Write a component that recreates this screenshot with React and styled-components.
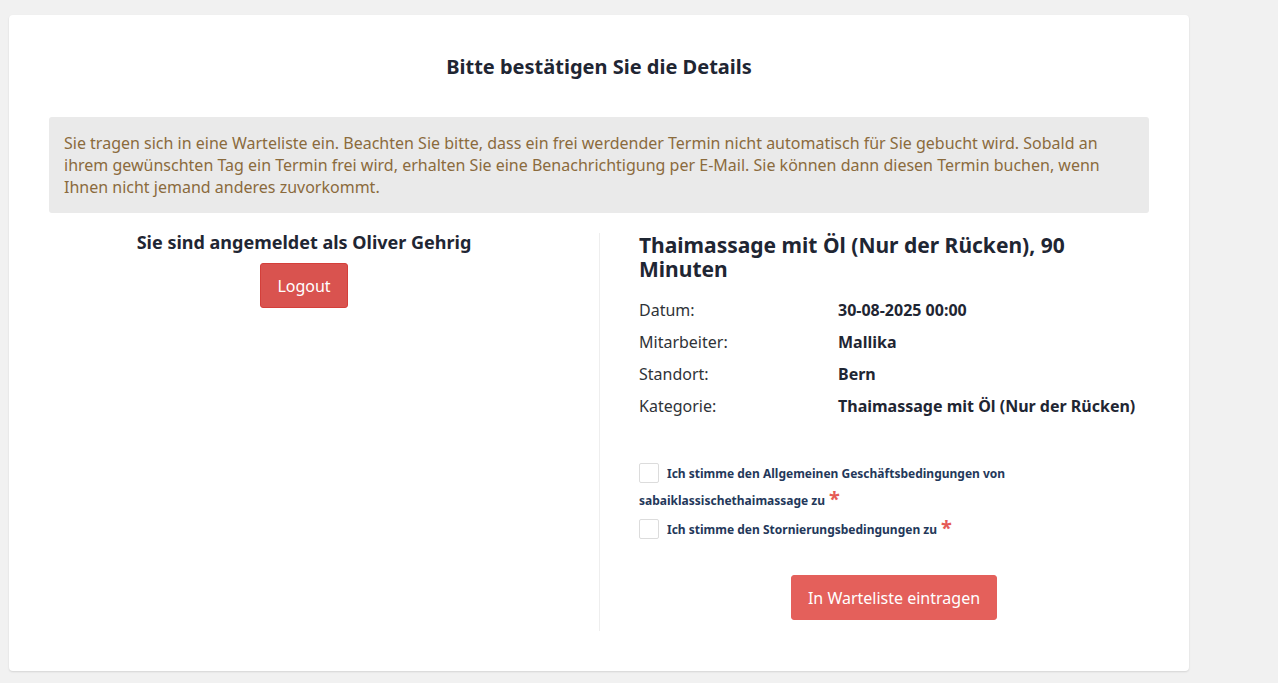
import styled, { createGlobalStyle } from 'styled-components';

const GlobalStyle = createGlobalStyle`
  body {
    margin: 0;
    background: #f1f1f1;
    font-family: "Noto Sans", "Open Sans", sans-serif;
    color: #1f2633;
  }
`;

const Page = styled.div`
  padding: 15px 0 13px 9px;
`;

const Card = styled.div`
  width: 1180px;
  box-sizing: border-box;
  background: #fff;
  border-radius: 4px;
  box-shadow: 0 1px 2px rgba(0, 0, 0, 0.12);
  padding: 40px 40px 40px;
`;

const Title = styled.h2`
  margin: 0 0 38px;
  text-align: center;
  font-size: 20px;
  line-height: 24px;
  font-weight: 700;
  color: #1f2633;
`;

const Notice = styled.div`
  background: #eaeaea;
  border-radius: 3px;
  padding: 15px 15px;
  color: #8b6b3d;
  font-size: 16px;
  line-height: 22px;
`;

const Columns = styled.div`
  display: grid;
  grid-template-columns: 550px 550px;
  margin-top: 20px;
`;

const LeftCol = styled.div`
  padding-right: 40px;
  display: flex;
  flex-direction: column;
  align-items: center;
`;

const RightCol = styled.div`
  border-left: 1px solid #eeeeee;
  padding: 0 0 11px 39px;
`;

const UserText = styled.div`
  font-size: 18px;
  font-weight: 700;
  line-height: 22px;
  margin-top: -2px;
`;

const Button = styled.button`
  font-family: inherit;
  font-size: 16px;
  color: #fff;
  background: ${(p) => p.$bg};
  border: 1px solid ${(p) => p.$border};
  border-radius: 3px;
  height: ${(p) => p.$h}px;
  padding: 0 ${(p) => p.$px}px;
  cursor: pointer;
`;

const LogoutWrap = styled.div`
  margin-top: 10px;
`;

const ServiceTitle = styled.h3`
  margin: 0 0 13px;
  font-size: 21px;
  line-height: 24px;
  font-weight: 700;
  color: #1f2633;
`;

const Details = styled.div`
  display: grid;
  grid-template-columns: 199px 1fr;
  grid-auto-rows: 32px;
  align-items: center;
  font-size: 16px;
`;

const Label = styled.div`
  color: #2f3338;
`;

const Value = styled.div`
  font-weight: 700;
  color: #1f2633;
`;

const Terms = styled.div`
  margin-top: 38px;
`;

const TermLine = styled.label`
  display: block;
  font-size: 12px;
  font-weight: 700;
  line-height: 27px;
  color: #24385a;
  margin-bottom: 2px;
`;

const Box = styled.span`
  display: inline-block;
  width: 18px;
  height: 18px;
  border: 1px solid #dcdcdc;
  border-radius: 2px;
  vertical-align: -5px;
  margin-right: 8px;
`;

const Star = styled.span`
  color: #e55a56;
  font-size: 20px;
  line-height: 0;
  margin-left: 4px;
  vertical-align: -1px;
`;

const Submit = styled.div`
  display: flex;
  justify-content: center;
  margin-top: 32px;
`;

const details = [
  ['Datum:', '30-08-2025 00:00'],
  ['Mitarbeiter:', 'Mallika'],
  ['Standort:', 'Bern'],
  ['Kategorie:', 'Thaimassage mit Öl (Nur der Rücken)'],
];

export default function App() {
  return (
    <>
      <GlobalStyle />
      <Page>
        <Card>
          <Title>Bitte bestätigen Sie die Details</Title>
          <Notice>
            Sie tragen sich in eine Warteliste ein. Beachten Sie bitte, dass ein frei werdender Termin nicht
            automatisch für Sie gebucht wird. Sobald an ihrem gewünschten Tag ein Termin frei wird, erhalten Sie
            eine Benachrichtigung per E-Mail. Sie können dann diesen Termin buchen, wenn Ihnen nicht jemand
            anderes zuvorkommt.
          </Notice>
          <Columns>
            <LeftCol>
              <UserText>Sie sind angemeldet als Oliver Gehrig</UserText>
              <LogoutWrap>
                <Button $bg="#d9534f" $border="#d43f3a" $h={45} $px={16}>Logout</Button>
              </LogoutWrap>
            </LeftCol>
            <RightCol>
              <ServiceTitle>Thaimassage mit Öl (Nur der Rücken), 90 Minuten</ServiceTitle>
              <Details>
                {details.map(([k, v]) => [
                  <Label key={k}>{k}</Label>,
                  <Value key={k + 'v'}>{v}</Value>,
                ])}
              </Details>
              <Terms>
                <TermLine>
                  <Box />
                  Ich stimme den Allgemeinen Geschäftsbedingungen von sabaiklassischethaimassage zu
                  <Star>*</Star>
                </TermLine>
                <TermLine>
                  <Box />
                  Ich stimme den Stornierungsbedingungen zu
                  <Star>*</Star>
                </TermLine>
              </Terms>
              <Submit>
                <Button $bg="#e4605b" $border="#e4605b" $h={45} $px={16}>In Warteliste eintragen</Button>
              </Submit>
            </RightCol>
          </Columns>
        </Card>
      </Page>
    </>
  );
}
